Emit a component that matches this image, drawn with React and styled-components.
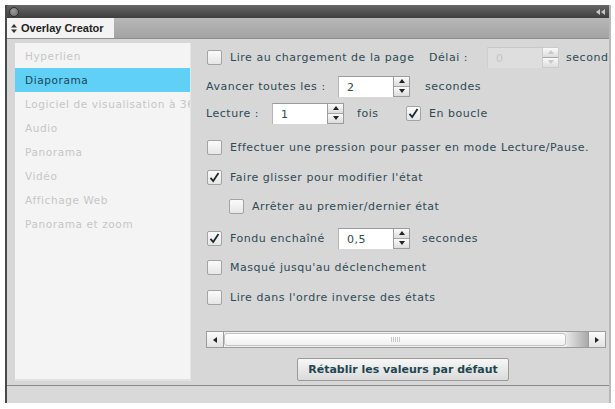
import React from "react";
import styled, { createGlobalStyle } from "styled-components";

const Global = createGlobalStyle`
  html, body {
    margin: 0;
    padding: 0;
    background: #ffffff;
  }
  body {
    font-family: "DejaVu Sans", Verdana, sans-serif;
  }
`;

const Page = styled.div`
  width: 615px;
  height: 409px;
  padding: 5px 4px 6px 5px;
  box-sizing: border-box;
`;

const Window = styled.div`
  height: 100%;
  display: flex;
  flex-direction: column;
  border-left: 2px solid #4a4a4a;
  border-right: 2px solid #b9b9b9;
  background: #d7d7d7;
`;

const TitleBar = styled.div`
  height: 13px;
  display: flex;
  align-items: center;
  justify-content: space-between;
  padding: 0 4px 0 2px;
  background: linear-gradient(#676767, #3e3e3e);
`;

const CloseDot = styled.div`
  width: 8px;
  height: 8px;
  border-radius: 50%;
  background: radial-gradient(circle at 40% 35%, #9a9a9a, #6a6a6a);
  border: 1px solid #2f2f2f;
`;

const TabRow = styled.div`
  height: 20px;
  display: flex;
  background: linear-gradient(#b7b7b7, #a3a3a3);
  border-bottom: 1px solid #8d8d8d;
`;

const Tab = styled.div`
  width: 103px;
  display: flex;
  align-items: center;
  gap: 4px;
  padding-left: 4px;
  background: #f3f3f3;
  font-family: "Liberation Sans", Arial, sans-serif;
  font-size: 11px;
  font-weight: bold;
  color: #222;
`;

const Body = styled.div`
  flex: 1;
  display: flex;
  padding: 4px 0 4px 8px;
  min-height: 0;
`;

const List = styled.div`
  width: 175px;
  background: #f4f4f4;
  border-right: 1px solid #e4e4e4;
  border-bottom: 2px solid #e2e2e2;
  padding-top: 1px;
`;

const Item = styled.div`
  height: 24px;
  line-height: 24px;
  padding-left: 10px;
  font-size: 10.5px;
  letter-spacing: 0.6px;
  white-space: nowrap;
  overflow: hidden;
  color: ${(p) => (p.$active ? "#1c4656" : "#c6c6c6")};
  background: ${(p) => (p.$active ? "#60d0f6" : "transparent")};
`;

const Panel = styled.div`
  flex: 1;
  display: flex;
  flex-direction: column;
  padding: 3px 0 0 15px;
  overflow: hidden;
  font-size: 11px;
  letter-spacing: 0.53px;
  color: #2e4a55;
`;

const Row = styled.div`
  height: 22px;
  margin-top: ${(p) => p.$mt || 0}px;
  padding-left: ${(p) => p.$indent || 0}px;
  display: flex;
  align-items: center;
  white-space: nowrap;
`;

const Label = styled.span`
  display: inline-block;
  width: ${(p) => (p.$w ? `${p.$w}px` : "auto")};
  margin-left: ${(p) => p.$ml || 0}px;
  flex-shrink: 0;
`;

const Box = styled.span`
  width: 13px;
  height: 13px;
  flex-shrink: 0;
  margin-left: ${(p) => p.$ml ?? 1}px;
  margin-right: 8px;
  border: 1px solid #a3a3a3;
  border-radius: 2px;
  background: linear-gradient(#fbfbfb, #e6e6e6);
  display: flex;
  align-items: center;
  justify-content: center;
`;

const Field = styled.div`
  display: flex;
  align-items: stretch;
  height: 21px;
  flex-shrink: 0;
`;

const Input = styled.div`
  width: ${(p) => p.$w}px;
  box-sizing: border-box;
  padding-left: 8px;
  line-height: 21px;
  background: ${(p) => (p.$disabled ? "#dedede" : "#ffffff")};
  color: ${(p) => (p.$disabled ? "#c4c4c4" : "#2e4a55")};
  border-top: 1px solid ${(p) => (p.$disabled ? "#c8c8c8" : "#9a9a9a")};
  border-left: 1px solid ${(p) => (p.$disabled ? "#cfcfcf" : "#b5b5b5")};
`;

const Spinner = styled.div`
  width: 17px;
  display: flex;
  flex-direction: column;
  border: 1px solid ${(p) => (p.$disabled ? "#cbcbcb" : "#9c9c9c")};
  box-sizing: border-box;
`;

const SpinBtn = styled.div`
  flex: 1;
  display: flex;
  align-items: center;
  justify-content: center;
  background: linear-gradient(#fafafa, #dcdcdc);
  & + & {
    border-top: 1px solid ${(p) => (p.$disabled ? "#d2d2d2" : "#a5a5a5")};
  }
`;

const ScrollBar = styled.div`
  margin-top: 23px;
  width: 400px;
  height: 17px;
  display: flex;
  box-sizing: border-box;
  border: 1px solid #9c9c9c;
  background: #f2f2f2;
`;

const ScrollBtn = styled.div`
  width: 16px;
  display: flex;
  align-items: center;
  justify-content: center;
  background: linear-gradient(#fbfbfb, #e2e2e2);
  border-${(p) => p.$side}: 1px solid #9c9c9c;
`;

const Thumb = styled.div`
  flex: 1;
  display: flex;
  align-items: center;
  justify-content: center;
  margin: 1px 0;
  border: 1px solid #c2c2c2;
  border-radius: 3px;
  background: linear-gradient(#ffffff, #f1f1f1);
`;

const TrackEnd = styled.div`
  width: 22px;
  background: linear-gradient(90deg, #e8e8e8, #a9a9a9);
`;

const Grip = styled.div`
  width: 9px;
  height: 5px;
  background: repeating-linear-gradient(90deg, #c9c9c9 0 1px, transparent 1px 2px);
`;

const ButtonWrap = styled.div`
  width: 400px;
  display: flex;
  justify-content: center;
  margin-top: 10px;
`;

const Button = styled.div`
  width: 212px;
  height: 23px;
  box-sizing: border-box;
  display: flex;
  align-items: center;
  justify-content: center;
  border: 1px solid #9a9a9a;
  border-radius: 2px;
  background: linear-gradient(#f7f7f7, #dadada);
  font-size: 11px;
  letter-spacing: 0;
  font-weight: bold;
  color: #1f4651;
  margin-left: -6px;
`;

const Footer = styled.div`
  height: 17px;
  border-top: 1px solid #8a8a8a;
  background: #d9d9d9;
`;

const Tri = ({ dir, color = "#222" }) => {
  const pts = {
    up: "0,4 3,0 6,4",
    down: "0,0 6,0 3,4",
    left: "4,0 4,6 0,3",
    right: "0,0 0,6 4,3",
  }[dir];
  const vertical = dir === "up" || dir === "down";
  const w = vertical ? 6 : 4;
  const h = vertical ? 4 : 6;
  return (
    <svg width={w} height={h} viewBox={`0 0 ${w} ${h}`}>
      <polygon points={pts} fill={color} />
    </svg>
  );
};

const Check = () => (
  <svg width="11" height="11" viewBox="0 0 11 11">
    <path d="M1.5 5.8 L4.2 9 L9.5 1" stroke="#1b2a30" strokeWidth="1.8" fill="none" />
  </svg>
);

const CheckBox = ({ checked, ml }) => <Box $ml={ml}>{checked && <Check />}</Box>;

const NumField = ({ value, w, disabled }) => (
  <Field>
    <Input $w={w} $disabled={disabled}>{value}</Input>
    <Spinner $disabled={disabled}>
      <SpinBtn $disabled={disabled}>
        <Tri dir="up" color={disabled ? "#c8c8c8" : "#222"} />
      </SpinBtn>
      <SpinBtn $disabled={disabled}>
        <Tri dir="down" color={disabled ? "#c8c8c8" : "#222"} />
      </SpinBtn>
    </Spinner>
  </Field>
);

const items = [
  "Hyperlien",
  "Diaporama",
  "Logiciel de visualisation à 360°",
  "Audio",
  "Panorama",
  "Vidéo",
  "Affichage Web",
  "Panorama et zoom",
];

export default function App() {
  return (
    <Page>
      <Global />
      <Window>
        <TitleBar>
          <CloseDot />
          <svg width="9" height="6" viewBox="0 0 9 6">
            <polygon points="4,0 4,6 0,3" fill="#c9c9c9" />
            <polygon points="9,0 9,6 5,3" fill="#c9c9c9" />
          </svg>
        </TitleBar>
        <TabRow>
          <Tab>
            <svg width="6" height="9" viewBox="0 0 6 9">
              <polygon points="0,3.5 3,0 6,3.5" fill="#333" />
              <polygon points="0,5.5 6,5.5 3,9" fill="#333" />
            </svg>
            Overlay Creator
          </Tab>
        </TabRow>
        <Body>
          <List>
            {items.map((t) => (
              <Item key={t} $active={t === "Diaporama"}>
                {t}
              </Item>
            ))}
          </List>
          <Panel>
            <Row>
              <CheckBox />
              <Label $w={199}>Lire au chargement de la page</Label>
              <Label $w={58}>Délai :</Label>
              <NumField value="0" w={55} disabled />
              <Label $ml={7}>secondes</Label>
            </Row>
            <Row $mt={7}>
              <Label $w={132}>Avancer toutes les :</Label>
              <NumField value="2" w={55} />
              <Label $ml={15}>secondes</Label>
            </Row>
            <Row $mt={5}>
              <Label $w={66}>Lecture :</Label>
              <NumField value="1" w={55} />
              <Label $ml={13} $w={49}>fois</Label>
              <CheckBox checked ml={0} />
              <Label>En boucle</Label>
            </Row>
            <Row $mt={12}>
              <CheckBox />
              <Label>Effectuer une pression pour passer en mode Lecture/Pause.</Label>
            </Row>
            <Row $mt={8}>
              <CheckBox checked />
              <Label>Faire glisser pour modifier l'état</Label>
            </Row>
            <Row $mt={7} $indent={22}>
              <CheckBox />
              <Label>Arrêter au premier/dernier état</Label>
            </Row>
            <Row $mt={10}>
              <CheckBox checked />
              <Label $w={108}>Fondu enchaîné</Label>
              <NumField value="0,5" w={55} />
              <Label $ml={12}>secondes</Label>
            </Row>
            <Row $mt={7}>
              <CheckBox />
              <Label>Masqué jusqu'au déclenchement</Label>
            </Row>
            <Row $mt={8}>
              <CheckBox />
              <Label>Lire dans l'ordre inverse des états</Label>
            </Row>
            <ScrollBar>
              <ScrollBtn $side="right">
                <Tri dir="left" />
              </ScrollBtn>
              <Thumb>
                <Grip />
              </Thumb>
              <TrackEnd />
              <ScrollBtn $side="left">
                <Tri dir="right" />
              </ScrollBtn>
            </ScrollBar>
            <ButtonWrap>
              <Button>Rétablir les valeurs par défaut</Button>
            </ButtonWrap>
          </Panel>
        </Body>
        <Footer />
      </Window>
    </Page>
  );
}
